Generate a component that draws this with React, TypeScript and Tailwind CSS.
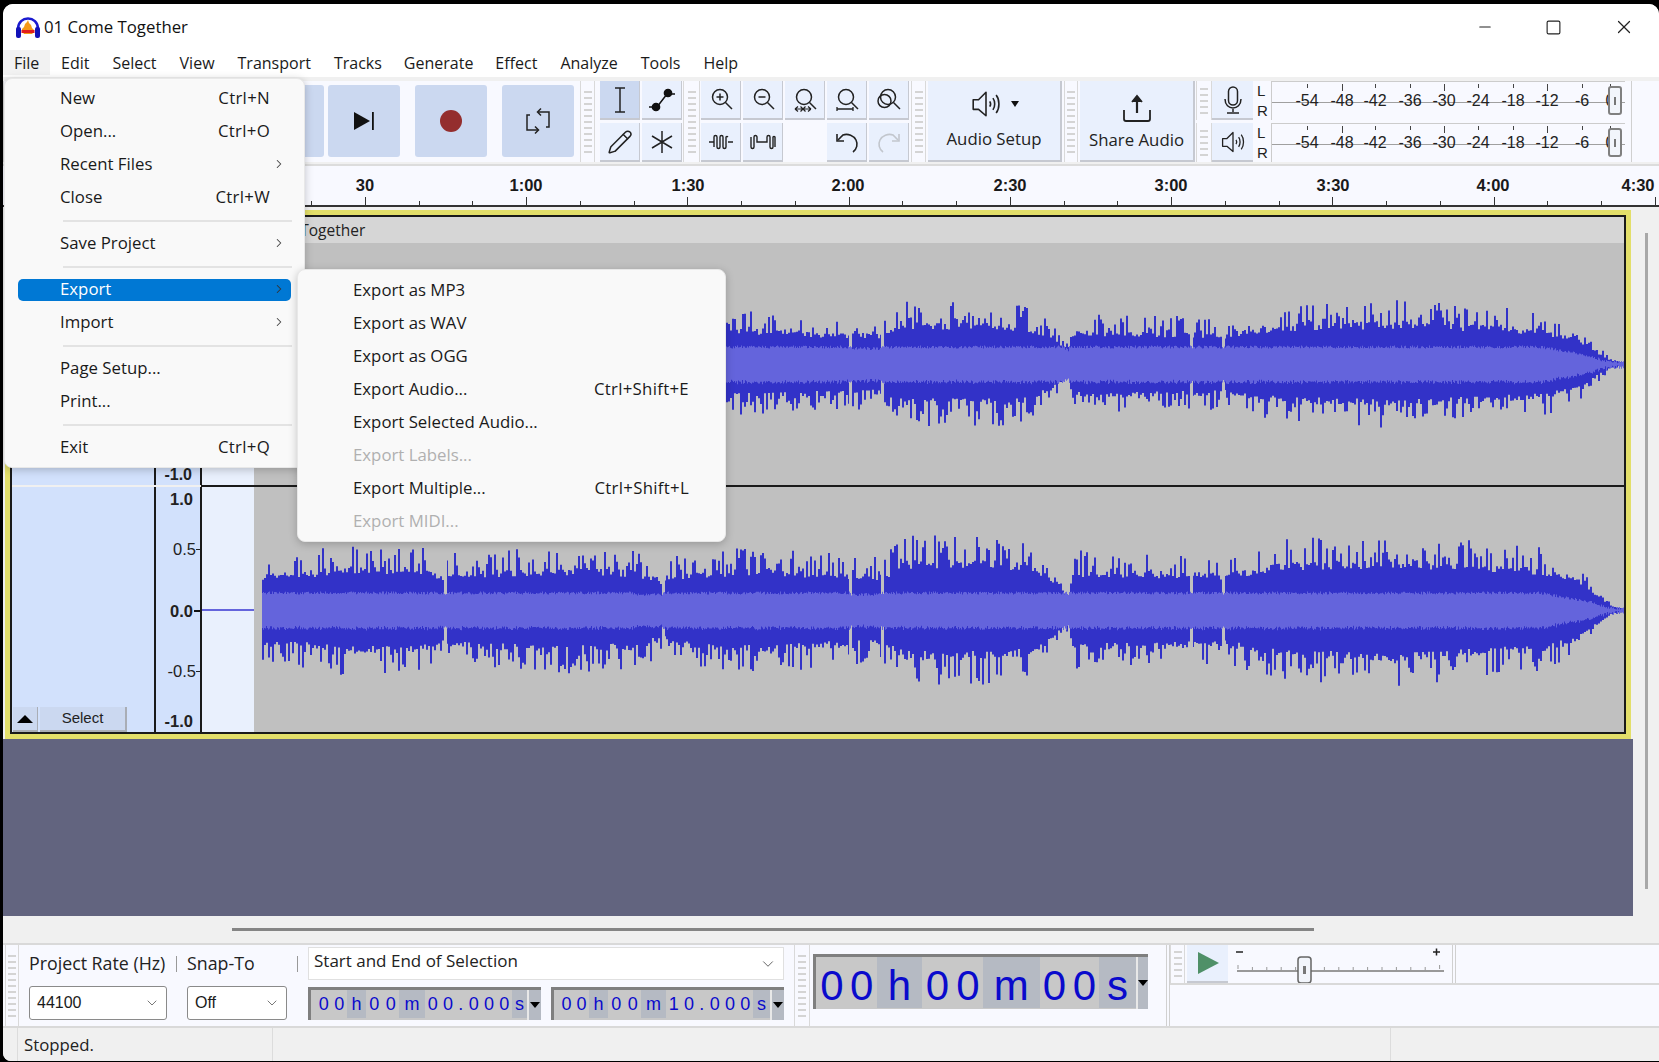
import { useMemo } from "react";
import { ChevronDown, ChevronRight, Minus, Pencil, Square, X } from "lucide-react";

const menuItems = [
  ["File", "w-[47px] pl-[11px] bg-[#f2f2f2]"],
  ["Edit", "ml-[11px]"],
  ["Select", "ml-[23px]"],
  ["View", "ml-[23px]"],
  ["Transport", "ml-[23px]"],
  ["Tracks", "ml-[23px]"],
  ["Generate", "ml-[22px]"],
  ["Effect", "ml-[22px]"],
  ["Analyze", "ml-[23px]"],
  ["Tools", "ml-[23px]"],
  ["Help", "ml-[23px]"],
];

type Row = { label?: string; key?: string; sub?: boolean; active?: boolean; off?: boolean; sep?: boolean };

const fileMenu: Row[] = [
  { label: "New", key: "Ctrl+N" },
  { label: "Open...", key: "Ctrl+O" },
  { label: "Recent Files", sub: true },
  { label: "Close", key: "Ctrl+W" },
  { sep: true },
  { label: "Save Project", sub: true },
  { sep: true },
  { label: "Export", sub: true, active: true },
  { label: "Import", sub: true },
  { sep: true },
  { label: "Page Setup..." },
  { label: "Print..." },
  { sep: true },
  { label: "Exit", key: "Ctrl+Q" },
];

const exportMenu: Row[] = [
  { label: "Export as MP3" },
  { label: "Export as WAV" },
  { label: "Export as OGG" },
  { label: "Export Audio...", key: "Ctrl+Shift+E" },
  { label: "Export Selected Audio..." },
  { label: "Export Labels...", off: true },
  { label: "Export Multiple...", key: "Ctrl+Shift+L" },
  { label: "Export MIDI...", off: true },
];

// peak envelope of the song, x in page pixels
const envelope = [
  [262, 50], [300, 52], [340, 60], [420, 58], [445, 46], [450, 52], [560, 58], [632, 55], [663, 42], [668, 50],
  [760, 58], [850, 50], [882, 50], [906, 68], [1000, 68], [1030, 62], [1050, 45], [1068, 20], [1071, 55],
  [1190, 52], [1223, 50], [1285, 65], [1400, 70], [1540, 58], [1575, 45], [1597, 20], [1610, 6], [1626, 1],
];
const dips = [445, 663, 850, 882, 1191, 1223];

function envAt(x: number) {
  for (let i = 1; i < envelope.length; i++) {
    const [x0, y0] = envelope[i - 1];
    const [x1, y1] = envelope[i];
    if (x <= x1) return y0 + ((x - x0) / (x1 - x0)) * (y1 - y0);
  }
  return 1;
}

function wavePaths(seed: number, cy: number, gain: number) {
  let s = seed;
  const rand = () => {
    s = (s * 1664525 + 1013904223) % 4294967296;
    return s / 4294967296;
  };
  const cols: { x: number; up: number; down: number; r1: number; r2: number }[] = [];
  const pick = (a: number) => {
    const r = rand();
    if (r < 0.36) return a * (0.76 + rand() * 0.34);
    return a * (0.6 + rand() * 0.14);
  };
  let up = 0;
  let down = 0;
  for (let x = 262; x < 1626; x++) {
    const a = envAt(x) * gain;
    if (x % 2 === 0 || up === 0) {
      up = pick(a);
      down = pick(a);
    }
    const tail = x > 1540 ? Math.max(0.06, (1626 - x) / 86) : 1;
    const base = x > 632 && x < 663 ? 14 : x > 850 && x < 882 ? 14 : 15.5;
    const r = Math.min(base, a * 0.7) * tail + rand() * 3;
    let u = up;
    let d = down;
    if (dips.some((v) => Math.abs(v - x) < 1.5)) {
      u = r - 1;
      d = r - 1;
    }
    cols.push({ x, up: u, down: d, r1: r, r2: r + rand() * 2 });
  }
  const shape = (top: (c: (typeof cols)[0]) => number, bot: (c: (typeof cols)[0]) => number) => {
    let p = "";
    cols.forEach((c, i) => {
      p += `${i ? "L" : "M"}${c.x - 254} ${(cy - top(c)).toFixed(1)}H${c.x - 253}`;
    });
    for (let i = cols.length - 1; i >= 0; i--) {
      const c = cols[i];
      p += `L${c.x - 253} ${(cy + bot(c)).toFixed(1)}H${c.x - 254}`;
    }
    return p + "Z";
  };
  return [shape((c) => c.up, (c) => c.down), shape((c) => c.r1, (c) => c.r2)];
}

function Wave({ seed, cy, h, gain = 1 }: { seed: number; cy: number; h: number; gain?: number }) {
  const [peak, rms] = useMemo(() => wavePaths(seed, cy, gain), [seed, cy, gain]);
  return (
    <svg width="1372" height={h} className="block">
      <path d={peak} fill="#3232c8" />
      <path d={rms} fill="#6464dc" />
    </svg>
  );
}

function Grip({ h = 76, w = 15 }: { h?: number; w?: number }) {
  const count = Math.floor((h - 6) / 6.4);
  return (
    <div className="flex flex-col items-center justify-center gap-[4px] bg-[#f8f9ff] border-x border-[#d9d9d9] shrink-0" style={{ width: w, height: h }}>
      {Array.from({ length: count }).map((_, i) => (
        <div key={i} className="h-[2px] w-[8px] bg-[#d4d4d4]" />
      ))}
    </div>
  );
}

function BigBtn({ children, w = "w-[72px]" }: { children?: React.ReactNode; w?: string }) {
  return <div className={`${w} h-[72px] bg-[#cbd8f0] rounded-[3px] flex items-center justify-center shrink-0`}>{children}</div>;
}

function ToolBtn({ children, on, blank }: { children?: React.ReactNode; on?: boolean; blank?: boolean }) {
  if (blank) return <div className="w-[40px] h-[39px]" />;
  return (
    <div className={`w-[40px] h-[39px] flex items-center justify-center border-b-2 border-r border-[#c6c9d1] ${on ? "bg-[#cbd8f0]" : "bg-[#e9f0fd]"}`}>
      {children}
    </div>
  );
}

const iconStroke = { fill: "none", stroke: "#222", strokeWidth: 1.5 };

function ZoomIcon({ kind }: { kind: "in" | "out" | "sel" | "fit" | "tog" }) {
  return (
    <svg width="26" height="26" viewBox="0 0 26 26" {...iconStroke}>
      <circle cx="12" cy="10" r="7.5" />
      <path d="M17.5 15.5 L24 22" />
      {kind === "tog" && <circle cx="8.5" cy="14" r="6.5" />}
      {kind === "in" && <path d="M8.5 10h7M12 6.5v7" />}
      {kind === "out" && <path d="M8.5 10h7" />}
      {kind === "sel" && <path d="M3 22h16M3 22l3-2.5M3 22l3 2.5M19 22l-3-2.5M19 22l-3 2.5M11 22l-2.5-2.5M11 22l-2.5 2.5M11 22l2.5-2.5M11 22l2.5 2.5" strokeWidth="1.2" />}
      {kind === "fit" && <path d="M3 20v4M19 20v4M3 22h16" strokeWidth="1.3" />}
    </svg>
  );
}

function SpeakerIcon({ size = 28 }: { size?: number }) {
  return (
    <svg width={size} height={size} viewBox="0 0 30 30" fill="none" stroke="#222" strokeWidth="1.5">
      <path d="M3 11h5l7-7v22l-7-6H3z" strokeLinejoin="round" />
      <path d="M18.5 12.5c1 1.500 1 3.500 0 5M21.500 9.500c2.200 3 2.200 8 0 11M24.500 6.500c3.500 4.500 3.500 12.500 0 17" />
    </svg>
  );
}

function Logo() {
  return (
    <svg width="26" height="26" viewBox="0 0 26 26">
      <path d="M3 15 C3 1 23 1 23 15" fill="none" stroke="#1b1bd0" strokeWidth="2.6" />
      <rect x="1" y="13" width="5" height="11" rx="2" fill="#1212b8" />
      <rect x="20" y="13" width="5" height="11" rx="2" fill="#1212b8" />
      <path d="M7 17V15L9 13L10 10L12 8L13 6L14 9L16 11L17 14L19 16V18L17 20H9Z" fill="#f59a18" />
      <path d="M6.500 16H19.500V19H6.500Z" fill="#e11d1d" />
    </svg>
  );
}

const meterLabels = [["-54", 1305], ["-48", 1340], ["-42", 1373], ["-36", 1408], ["-30", 1442], ["-24", 1476], ["-18", 1511], ["-12", 1545], ["-6", 1580], ["0", 1608]] as const;

function Meter({ icon }: { icon: React.ReactNode }) {
  return (
    <div className="flex h-[39px] items-stretch">
      <Grip h={39} w={16} />
      <div className="w-[41px] h-[39px] bg-[#e9f0fd] border-b-2 border-[#c6c9d1] flex items-center justify-center">{icon}</div>
      <div className="w-[18px] pl-[4px] flex flex-col justify-between text-[15px] leading-[19px] text-[#222] font-['Liberation_Sans',sans-serif]">
        <span>L</span>
        <span>R</span>
      </div>
      <div className="relative w-[354px] h-[39px] border-t border-[#ccc] border-l font-['Liberation_Sans',sans-serif]">
        <div className="absolute left-0 right-0 top-[20px] h-px bg-[#a0a0a0]" />
        {meterLabels.map(([t, x], i) => (
          <div key={t}>
            <div className={`absolute top-[2px] w-px bg-[#444] ${i % 3 === 1 ? "h-[7px]" : "h-[4px]"}`} style={{ left: x - 1270 }} />
            <span className="absolute top-[10px] text-[16px] leading-[18px] text-[#222] -translate-x-1/2" style={{ left: x - 1270 }}>
              {t}
            </span>
          </div>
        ))}
        <div className="absolute left-[336px] top-[4px] w-[14px] h-[29px] rounded-[3px] border-2 border-[#808080] bg-[#f2f5fb] flex items-center justify-center">
          <div className="w-[2px] h-[8px] bg-[#777]" />
        </div>
      </div>
    </div>
  );
}

const rulerMarks = [
  ["30", 365], ["1:00", 526], ["1:30", 688], ["2:00", 848], ["2:30", 1010], ["3:00", 1171], ["3:30", 1333], ["4:00", 1493], ["4:30", 1638],
] as const;

function Ruler() {
  const ticks = Array.from({ length: 30 }, (_, i) => 311 + i * 53.75);
  return (
    <div className="relative h-[43px] shrink-0 bg-[#f8f9ff] border-t-2 border-[#dcdcdc] border-b-2 border-b-[#333] font-['Liberation_Sans',sans-serif]">
      {ticks.map((x, i) => (
        <div key={x} className={`absolute bottom-0 w-px bg-[#333] ${i % 3 === 1 ? "h-[8px]" : "h-[4px]"}`} style={{ left: x - 3 }} />
      ))}
      {rulerMarks.map(([t, x]) => (
        <span key={t} className="absolute top-[9px] -translate-x-1/2 text-[16.5px] font-bold leading-[20px] text-[#1a1a1a]" style={{ left: x - 3 }}>
          {t}
        </span>
      ))}
    </div>
  );
}

function TimeBox({ groups, big }: { groups: [string, boolean, number][]; big?: boolean }) {
  return (
    <div className={`flex items-stretch border-t-[3px] border-l-[3px] border-[#7f7f7f] bg-[#c8c8c8] font-['Liberation_Sans',sans-serif] text-[#0a0acc] ${big ? "w-[335px] h-[55px] text-[42px]" : "w-[233px] h-[33px] text-[18px]"}`}>
      <div className={big ? "w-[1px]" : "w-[5px]"} />
      {groups.map(([t, dark, w], i) => (
        <div key={i} className={`flex items-center justify-around ${big ? "mb-[1px] pt-[5px]" : "mb-[2px]"} ${dark ? "bg-[#b5bac3]" : "bg-[#c8c8c8]"}`} style={{ width: w }}>
          {t.split("").map((c, j) => (
            <span key={j}>{c}</span>
          ))}
        </div>
      ))}
      <div className="relative flex-1 bg-[#b5bac3] border-l-2 border-[#e8e8e8] flex items-center justify-center">
        <div className="w-0 h-0 border-x-[5px] border-x-transparent border-t-[6px] border-t-black" />
      </div>
    </div>
  );
}

const small1: [string, boolean, number][] = [["00", false, 31], ["h", true, 19], ["00", false, 33], ["m", true, 26], ["00.000", false, 87], ["s", true, 15]];
const small2: [string, boolean, number][] = [["00", false, 30], ["h", true, 19], ["00", false, 33], ["m", true, 25], ["10.000", false, 87], ["s", true, 17]];
const bigTime: [string, boolean, number][] = [["00", false, 60], ["h", true, 46], ["00", false, 61], ["m", true, 57], ["00", false, 60], ["s", true, 37]];

function Combo({ text, w }: { text: string; w: string }) {
  return (
    <div className={`${w} h-[34px] bg-white border border-[#8a8a8a] rounded-[3px] flex items-center justify-between pl-[7px] pr-[6px] text-[16px] text-[#1a1a1a] font-['Liberation_Sans',sans-serif]`}>
      <span>{text}</span>
      <ChevronDown size={16} strokeWidth={1.2} color="#555" />
    </div>
  );
}

function Popup({ rows, className, rightPad }: { rows: Row[]; className: string; rightPad: string }) {
  return (
    <div className={`absolute bg-[#f9f9f9] rounded-[8px] shadow-[0_2px_8px_rgba(0,0,0,0.22)] border border-[#e8e8e8] font-['Open_Sans',sans-serif] text-[16.8px] text-[#1a1a1a] ${className}`}>
      {rows.map((r, i) =>
        r.sep ? (
          <div key={i} className="h-[13px] flex items-center pl-[58px] pr-[12px]">
            <div className="h-[2px] w-full bg-[#e3e3e3]" />
          </div>
        ) : (
          <div key={i} className="h-[33px] py-[5.5px] px-[13px]">
            <div className={`h-[22px] rounded-[5px] pl-[42px] pb-[2px] flex items-center justify-between ${rightPad} ${r.active ? "bg-[#0078d4] text-white" : ""} ${r.off ? "text-[#b0b0b0]" : ""}`}>
              <span>{r.label}</span>
              {r.key && <span className="tracking-[0.3px]">{r.key}</span>}
              {r.sub && <ChevronRight size={14} strokeWidth={1.8} color={r.active ? "#333" : "#444"} />}
            </div>
          </div>
        ),
      )}
    </div>
  );
}

export default function App() {
  return (
    <div className="relative w-[1659px] h-[1062px] bg-black pt-[4px] pl-[3px] overflow-hidden font-['Open_Sans',sans-serif]">
      <div className="w-[1656px] h-[1057px] rounded-t-[10px] rounded-bl-[8px] overflow-hidden flex flex-col bg-[#f0f0f0]">
        {/* title bar */}
        <div className="h-[46px] shrink-0 bg-white flex items-center pl-[12px]">
          <Logo />
          <span className="ml-[3px] text-[16.8px] text-[#111]">01 Come Together</span>
          <div className="ml-auto flex items-center text-[#222]">
            <Minus size={18} strokeWidth={1.4} className="mr-[51px]" />
            <Square size={17} strokeWidth={1.6} className="mr-[51px]" />
            <X size={22} strokeWidth={1.3} className="mr-[24px]" />
          </div>
        </div>

        {/* menu bar */}
        <div className="h-[27px] shrink-0 bg-white flex items-stretch pb-[2px] text-[16px] text-[#1a1a1a]">
          {menuItems.map(([t, c]) => (
            <div key={t} className={`flex items-center ${c}`}>
              {t}
            </div>
          ))}
        </div>

        {/* toolbars */}
        <div className="h-[87px] shrink-0 bg-[#f0f0f0] pt-[4px]">
          <div className="h-[81px] bg-[#f8f9ff] flex items-start">
            <Grip h={81} w={14} />
            <div className="flex gap-[3px] mt-[4px] ml-[10px]">
              <BigBtn />
              <BigBtn />
              <BigBtn />
              <BigBtn />
            </div>
            <div className="mt-[4px] ml-[4px] flex gap-[15px]">
              <BigBtn>
                <svg width="24" height="24" viewBox="0 0 24 24">
                  <path d="M2 3 L18 12 L2 21Z" fill="#111" />
                  <rect x="20" y="3" width="1.8" height="18" fill="#111" />
                </svg>
              </BigBtn>
              <BigBtn>
                <div className="w-[22px] h-[22px] rounded-full bg-[#942e2e]" />
              </BigBtn>
              <BigBtn>
                <svg width="26" height="28" viewBox="0 0 26 28" fill="none" stroke="#222" strokeWidth="1.5">
                  <path d="M13 5H24V20H21M13 23H2V8H5" />
                  <path d="M16 1.500L12.500 5L16 8.500M10 19.500L13.500 23L10 26.500" />
                </svg>
              </BigBtn>
            </div>
            <div className="ml-[6px]">
              <Grip h={81} w={15} />
            </div>
            <div className="ml-[5px] grid grid-cols-2 gap-x-[2px] gap-y-[3px]">
              <ToolBtn on>
                <svg width="20" height="30" viewBox="0 0 20 30" fill="none" stroke="#222" strokeWidth="1.5">
                  <path d="M5 3h10M5 27h10M10 3v24" />
                </svg>
              </ToolBtn>
              <ToolBtn>
                <svg width="32" height="26" viewBox="0 0 32 26" fill="#111" stroke="#111" strokeWidth="1.5">
                  <path d="M3 20h8L21 7h8" fill="none" />
                  <circle cx="10" cy="20" r="3.600" />
                  <circle cx="22" cy="6" r="3.600" />
                </svg>
              </ToolBtn>
              <ToolBtn>
                <Pencil size={26} strokeWidth={1.4} color="#222" />
              </ToolBtn>
              <ToolBtn>
                <svg width="26" height="26" viewBox="0 0 26 26" fill="none" stroke="#222" strokeWidth="1.5">
                  <path d="M13 2v22M3 7l20 12M23 7L3 19" />
                </svg>
              </ToolBtn>
            </div>
            <div className="ml-[1px]">
              <Grip h={81} w={17} />
            </div>
            <div className="ml-[1px] grid grid-cols-5 gap-x-[2px] gap-y-[3px]">
              <ToolBtn><ZoomIcon kind="in" /></ToolBtn>
              <ToolBtn><ZoomIcon kind="out" /></ToolBtn>
              <ToolBtn><ZoomIcon kind="sel" /></ToolBtn>
              <ToolBtn><ZoomIcon kind="fit" /></ToolBtn>
              <ToolBtn><ZoomIcon kind="tog" /></ToolBtn>
              <ToolBtn>
                <svg width="26" height="22" viewBox="0 0 26 22" fill="none" stroke="#222" strokeWidth="1.400">
                  <path d="M1 11h5M20 11h5M6 16V6a1.500 1.500 0 0 1 3 0v10a1.500 1.500 0 0 0 3 0V6a1.500 1.500 0 0 1 3 0v10a1.500 1.500 0 0 0 3 0V6a1.500 1.500 0 0 1 2 0" />
                </svg>
              </ToolBtn>
              <ToolBtn>
                <svg width="26" height="22" viewBox="0 0 26 22" fill="none" stroke="#222" strokeWidth="1.400">
                  <path d="M1 6v10a1.500 1.500 0 0 0 3 0V6a1.500 1.500 0 0 1 3 0v5h10V6a1.500 1.500 0 0 1 3 0v10a1.500 1.500 0 0 0 3 0V6a1.500 1.500 0 0 1 2 0v10" />
                </svg>
              </ToolBtn>
              <ToolBtn blank />
              <ToolBtn>
                <svg width="28" height="28" viewBox="0 0 28 28" fill="none" stroke="#222" strokeWidth="1.600">
                  <path d="M20 24c4-3 5-8 3-12S15 5 10 7L5 12" />
                  <path d="M4 6v7h7" />
                </svg>
              </ToolBtn>
              <ToolBtn>
                <svg width="28" height="28" viewBox="0 0 28 28" fill="none" stroke="#c2c6cd" strokeWidth="1.600">
                  <path d="M8 24c-4-3-5-8-3-12S13 5 18 7l5 5" />
                  <path d="M24 6v7h-7" />
                </svg>
              </ToolBtn>
            </div>
            <div className="ml-[2px]">
              <Grip h={81} w={15} />
            </div>
            <div className="ml-[2px] w-[134px] h-[81px] bg-[#e9f0fd] border-b-2 border-r-2 border-[#c6c9d1] flex flex-col items-center text-[16.8px] text-[#222]">
              <div className="h-[45px] flex items-center gap-[9px]">
                <SpeakerIcon size={32} />
                <div className="w-0 h-0 border-x-[4px] border-x-transparent border-t-[6px] border-t-[#111]" />
              </div>
              <span>Audio Setup</span>
            </div>
            <div className="ml-[2px]">
              <Grip h={81} w={14} />
            </div>
            <div className="ml-[2px] w-[115px] h-[81px] bg-[#e9f0fd] border-b-2 border-r-2 border-[#c6c9d1] flex flex-col items-center text-[16.8px] text-[#222]">
              <div className="h-[46px] flex items-center pt-[8px]">
                <svg width="30" height="30" viewBox="0 0 30 30" fill="none" stroke="#222" strokeWidth="1.8">
                  <path d="M2 17v9a2 2 0 0 0 2 2h22a2 2 0 0 0 2-2v-9" />
                  <path d="M15 3v17" strokeWidth="2.200" />
                  <path d="M10 9L15 3L20 9" fill="#222" />
                </svg>
              </div>
              <span>Share Audio</span>
            </div>
            <div className="ml-[1px] flex flex-col gap-[3px]">
              <Meter
                icon={
                  <svg width="24" height="28" viewBox="0 0 24 28" fill="none" stroke="#222" strokeWidth="1.500">
                    <rect x="7.500" y="1" width="9" height="18" rx="4.500" />
                    <path d="M4 13c0 12 16 12 16 0M12 23v3M6 27h12" />
                  </svg>
                }
              />
              <Meter icon={<SpeakerIcon size={26} />} />
            </div>
            <div className="ml-[6px] w-px h-[81px] bg-[#d0d0d0]" />
          </div>
        </div>

        <Ruler />

        {/* tracks */}
        <div className="h-[709px] shrink-0 flex">
          <div className="w-[1630px] flex flex-col bg-[#62647f]">
            <div className="h-[532px] shrink-0 pt-[3px] bg-[#f0f0f0]">
              <div className="h-[529px] ml-[2px] mr-[2px] border-[5px] border-[#e3df6a]">
                <div className="h-full border-2 border-[#1a1a1a] flex flex-col">
                  {/* first channel */}
                  <div className="h-[268px] flex shrink-0">
                    <div className="w-[142px] bg-[#d2e1fc]" />
                    <div className="w-[48px] bg-[#d2e1fc] border-x-2 border-[#1a1a1a] relative font-['Liberation_Sans',sans-serif]">
                      <span className="absolute right-[8px] bottom-[1px] text-[16px] font-bold leading-[18px] text-[#222]">-1.0</span>
                    </div>
                    <div className="w-[52px] bg-[#e9f0fd]" />
                    <div className="flex-1 bg-[#c0c0c0] relative overflow-hidden">
                      <div className="h-[26px] bg-[#d6d6d6] text-[15.5px] leading-[26px] text-[#222]">Come Together</div>
                      <div className="absolute left-0 top-0">
                        <Wave seed={77} cy={147} h={268} gain={0.84} />
                      </div>
                    </div>
                  </div>
                  <div className="h-[2px] ml-[189px] bg-[#1a1a1a] shrink-0" />
                  {/* second channel */}
                  <div className="flex-1 min-h-0 flex">
                    <div className="w-[142px] bg-[#d2e1fc] flex items-end pl-[1px] gap-[2px] font-['Liberation_Sans',sans-serif] text-[15px] text-[#222]">
                      <div className="w-[25px] h-[25px] bg-[#cbd8f0] border-b-2 border-r border-[#a9adb5] flex items-center justify-center">
                        <div className="w-0 h-0 border-x-[8px] border-x-transparent border-b-[8px] border-b-black" />
                      </div>
                      <div className="w-[87px] h-[25px] bg-[#cbd8f0] border-b-2 border-r-2 border-[#a9adb5] flex items-center justify-center">Select</div>
                    </div>
                    <div className="w-[48px] bg-[#d2e1fc] border-x-2 border-[#1a1a1a] flex flex-col items-end pr-[7px] pt-[3px] font-['Liberation_Sans',sans-serif] text-[16.5px] leading-[18px] text-[#222] relative">
                      <span className="font-bold">1.0</span>
                      <span className="mt-[32px] -mr-[3px]">0.5</span>
                      <span className="mt-[44px] font-bold">0.0</span>
                      <span className="mt-[42px] -mr-[3px]">-0.5</span>
                      <span className="mt-[32px] font-bold">-1.0</span>
                      <div className="absolute right-0 top-[62px] h-px w-[4px] bg-[#222]" />
                      <div className="absolute right-0 top-[123px] h-[2px] w-[6px] bg-[#111]" />
                      <div className="absolute right-0 top-[184px] h-px w-[4px] bg-[#222]" />
                    </div>
                    <div className="w-[52px] bg-[#e9f0fd] flex items-center">
                      <div className="w-full h-[2px] bg-[#6464dc]" />
                    </div>
                    <div className="flex-1 bg-[#c0c0c0] overflow-hidden">
                      <Wave seed={4242} cy={123} h={248} />
                    </div>
                  </div>
                </div>
              </div>
            </div>
          </div>
          <div className="flex-1 bg-[#f0f0f0] flex justify-center pt-[26px] pb-[26px]">
            <div className="w-[3px] h-[656px] bg-[#a8a8a8]" />
          </div>
        </div>

        {/* horizontal scroll */}
        <div className="h-[27px] shrink-0 bg-[#f0f0f0] pt-[12px] pl-[229px]">
          <div className="w-[1082px] h-[3px] bg-[#858585]" />
        </div>

        {/* bottom toolbars */}
        <div className="h-[85px] shrink-0 flex items-stretch bg-[#f8f9ff] border-t-2 border-[#d9d9d9] border-b-2">
          <div className="ml-[2px]">
            <Grip h={81} w={14} />
          </div>
          <div className="w-[775px] flex pl-[10px] pt-[2px] text-[17px] text-[#222] font-['Open_Sans',sans-serif]">
            <div className="w-[138px]">
              <div className="h-[39px] pb-[6px] flex items-center whitespace-nowrap text-[17.8px]">Project Rate (Hz)</div>
              <Combo text="44100" w="w-[138px]" />
            </div>
            <div className="ml-[9px] w-px h-[16px] bg-[#999] mt-[9px]" />
            <div className="ml-[10px] w-[100px]">
              <div className="h-[39px] pb-[6px] flex items-center text-[17.8px]">Snap-To</div>
              <Combo text="Off" w="w-[100px]" />
            </div>
            <div className="ml-[10px] w-px h-[16px] bg-[#999] mt-[9px]" />
            <div className="ml-[10px]">
              <div className="w-[476px] h-[33px] bg-white border border-[#e0e0e0] flex items-center justify-between pl-[5px] pr-[6px] pb-[5px]">
                <span>Start and End of Selection</span>
                <ChevronDown size={18} strokeWidth={1.2} color="#555" className="mt-[5px]" />
              </div>
              <div className="flex gap-[10px] mt-[7px]">
                <TimeBox groups={small1} />
                <TimeBox groups={small2} />
              </div>
            </div>
          </div>
          <Grip h={81} w={16} />
          <div className="w-[360px] pt-[9px] pl-[3px] border-r-4 border-double border-[#d0d0d0]">
            <TimeBox groups={bigTime} big />
          </div>
          <div className="flex-1 flex flex-col">
            <div className="h-[40px] flex border-b-2 border-[#d9d9d9]">
              <Grip h={38} w={15} />
              <div className="w-[41px] h-[38px] ml-[2px] bg-[#e9f0fd] border-b-2 border-[#c6c9d1] flex items-center justify-center">
                <svg width="24" height="26" viewBox="0 0 24 26">
                  <path d="M2 2 L23 13 L2 24Z" fill="#4f9068" />
                </svg>
              </div>
              <div className="w-[224px] pl-[8px] pr-[6px]">
                <svg width="210" height="38" viewBox="0 0 210 38">
                  <path d="M0 7h7" stroke="#222" strokeWidth="1.500" />
                  <path d="M197 7h7M200.500 3.500v7" stroke="#222" strokeWidth="1.500" />
                  <path d="M1 26h207" stroke="#999" strokeWidth="2" />
                  {Array.from({ length: 15 }).map((_, i) => (
                    <path key={i} d={`M${2 + i * 14.4} ${i === 0 || i === 14 ? 20 : 22}v4`} stroke="#999" strokeWidth="1" />
                  ))}
                  <rect x="62" y="13" width="13" height="26" rx="3" fill="#f2f5fb" stroke="#666" strokeWidth="1.500" transform="translate(0 -1)" />
                  <rect x="67" y="21" width="3" height="8" fill="#777" />
                </svg>
              </div>
              <div className="w-[4px] h-full border-x border-[#d0d0d0]" />
            </div>
            <div className="flex-1" />
          </div>
        </div>

        {/* status bar */}
        <div className="h-[33px] shrink-0 flex bg-[#f0f0f0] text-[16.8px] text-[#222]">
          <div className="w-[14px]" />
          <div className="w-[256px] border-x border-[#dcdcdc] pl-[6px] flex items-center">Stopped.</div>
          <div className="w-[1118px] border-r border-[#dcdcdc]" />
        </div>
      </div>

      <Popup rows={fileMenu} className="left-[4px] top-[78px] w-[301px] pt-[3px] h-[390px]" rightPad="pr-[5px] [&>span:nth-child(2)]:mr-[16px]" />
      <Popup rows={exportMenu} className="left-[297px] top-[269px] w-[429px] pt-[4px] h-[273px]" rightPad="pr-[23px]" />
    </div>
  );
}
